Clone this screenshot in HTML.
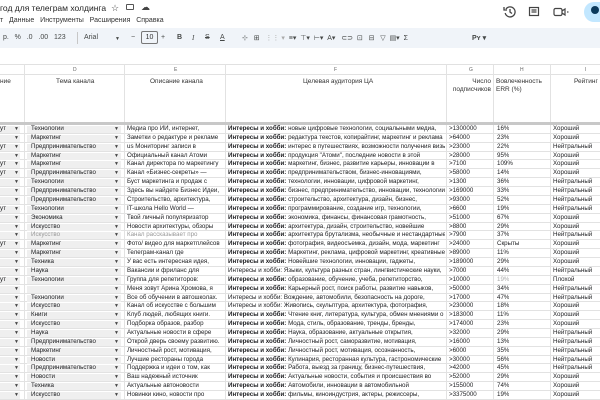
<!DOCTYPE html>
<html><head><meta charset="utf-8"><style>
*{margin:0;padding:0;box-sizing:border-box}
body{width:600px;height:400px;overflow:hidden;background:#fff;font-family:"Liberation Sans",Arial,sans-serif;color:#202124;position:relative}
.a{position:absolute;white-space:nowrap}
.tb{position:absolute;left:0;top:28px;width:600px;height:20px;background:#f0f4f9;border-radius:0}
.ti{font-size:7px;color:#444746;top:34px}
.colhdr{position:absolute;top:64px;left:0;width:600px;height:11px;border-top:1px solid #e1e1e1;border-bottom:1px solid #e1e1e1;background:#fff}
.vl{position:absolute;top:64px;width:1px;height:336px;background:#e2e2e2}
.L{font-size:5px;color:#666;top:67px}
.h{font-size:6.5px;color:#333;top:78px}
.div{position:absolute;left:0;top:122px;width:600px;height:3px;background:#c8c8c8}
.row{position:absolute;left:0;width:600px;height:8.87px;border-bottom:1px solid #e2e2e2;font-size:6.2px;line-height:8px}
.row span{position:absolute;top:0;white-space:nowrap;overflow:hidden}
.chip{position:absolute;top:1px;height:7px;background:#efefef}
.ar{font-size:5px;color:#444}
b{font-weight:bold}
</style></head><body>
<div class="a" style="left:0;top:3px;font-size:8.5px;color:#1f1f1f">год для телеграм холдинга</div>
<div class="a" style="left:111px;top:3px;font-size:9px;color:#444">☆</div>
<div class="a" style="left:126px;top:4px;width:8px;height:6px;border:1px solid #555;border-radius:1px"></div>
<div class="a" style="left:141px;top:2px;font-size:9px;color:#444">☁</div>
<div class="a" style="left:0;top:17px;font-size:7px;color:#333">т&nbsp;&nbsp;&nbsp;Данные&nbsp;&nbsp;&nbsp;Инструменты&nbsp;&nbsp;&nbsp;Расширения&nbsp;&nbsp;&nbsp;Справка</div>
<svg class="a" style="left:503px;top:5px" width="14" height="14" viewBox="0 0 14 14" fill="none" stroke="#444" stroke-width="1.3"><path d="M3 4A5 5 0 1 1 2.2 8"/><path d="M1 2v3h3"/><path d="M7 4v3l2 1.5"/></svg>
<svg class="a" style="left:528px;top:6px" width="12" height="12" viewBox="0 0 12 12" fill="none" stroke="#444" stroke-width="1.2"><rect x="1.5" y="1.5" width="9" height="8"/><path d="M3.5 4h5M3.5 6h5"/></svg>
<svg class="a" style="left:553px;top:7px" width="16" height="10" viewBox="0 0 16 10" fill="none" stroke="#444" stroke-width="1.2"><rect x="1" y="1.5" width="8" height="7" rx="1.5"/><path d="M9 4l3-2v6l-3-2"/><path d="M14 5h1.5" /></svg>
<div class="a" style="left:584px;top:2px;width:30px;height:20px;border-radius:10px;background:#c2e7ff"></div>
<div class="a" style="left:591px;top:6px;width:8px;height:8px;border-radius:50%;background:#0b3a5c"></div>
<div class="tb"></div>
<div class="a ti" style="left:3px">р.&nbsp;&nbsp;&nbsp;%&nbsp;&nbsp;&nbsp;.0&nbsp;&nbsp;&nbsp;.00&nbsp;&nbsp;&nbsp;123</div>
<div class="a" style="left:77px;top:32px;width:1px;height:12px;background:#c7c7c7"></div>
<div class="a ti" style="left:84px">Arial</div>
<div class="a ti" style="left:115px;font-size:5px;top:36px">▼</div>
<div class="a ti" style="left:131px">−</div>
<div class="a" style="left:141px;top:31px;width:17px;height:13px;border:1px solid #777;border-radius:2px;font-size:7px;text-align:center;line-height:11px;color:#333">10</div>
<div class="a ti" style="left:161px">+</div>
<div class="a ti" style="left:177px;font-weight:bold">B</div>
<div class="a ti" style="left:192px;font-style:italic;font-family:'Liberation Serif'">I</div>
<div class="a ti" style="left:205px;text-decoration:line-through">S</div>
<div class="a ti" style="left:220px;text-decoration:underline">A</div>
<div class="a ti" style="left:242px">⊹&nbsp;&nbsp;&nbsp;⊞&nbsp;&nbsp;&nbsp;<span style="color:#aaa">⋮⋮ ▾</span>&nbsp;&nbsp;≡▾&nbsp;&nbsp;⊤▾&nbsp;&nbsp;⊢▾&nbsp;&nbsp;A▾&nbsp;&nbsp;&nbsp;⊂⊃&nbsp;&nbsp;⊡&nbsp;&nbsp;&nbsp;⊟&nbsp;&nbsp;&nbsp;▽&nbsp;&nbsp;▤▾&nbsp;&nbsp;Σ</div>
<div class="a ti" style="left:472px;font-weight:bold">Рʏ ▾</div>
<div class="colhdr"></div>
<div class="vl" style="left:24px"></div><div class="vl" style="left:124px"></div><div class="vl" style="left:225px"></div><div class="vl" style="left:446px"></div><div class="vl" style="left:493px"></div><div class="vl" style="left:550px"></div>
<div class="a L" style="left:73px">D</div><div class="a L" style="left:174px">E</div><div class="a L" style="left:334px">F</div><div class="a L" style="left:469px">G</div><div class="a L" style="left:520px">H</div><div class="a L" style="left:585px">I</div>
<div class="a h" style="left:0">ние</div>
<div class="a h" style="left:56px">Тема канала</div>
<div class="a h" style="left:150px">Описание канала</div>
<div class="a h" style="left:303px">Целевая аудитория ЦА</div>
<div class="a h" style="left:451px;width:40px;text-align:right;line-height:8px">Число<br>подписчиков</div>
<div class="a h" style="left:496px;line-height:8px">Вовлеченность<br>ERR (%)</div>
<div class="a h" style="left:574px">Рейтинг</div>
<div class="div"></div>
<div id="rows"></div>
<script>
const d=[
["ут","Технологии","Медиа про ИИ, интернет,",1,"новые цифровые технологии, социальными медиа,",">1300000","16%","Хороший"],
["","Маркетинг","Заметки о редактуре и рекламе",1,"редактура текстов, копирайтинг, маркетинг и реклама",">64000","23%","Хороший"],
["ут","Предпринимательство","us Мониторинг записи в",1,"интерес в путешествиях, возможности получения визы",">23000","22%","Нейтральный"],
["","Маркетинг","Официальный канал Атоми",1,"продукция \"Атоми\", последние новости в этой",">28000","95%","Хороший"],
["ут","Маркетинг","Канал директора по маркетингу",1,"маркетинг, бизнес, развитие карьеры, инновации в",">7100","109%","Хороший"],
["ут","Предпринимательство","Канал «Бизнес-секреты» —",1,"предпринимательством, бизнес-инновациями,",">58000","14%","Хороший"],
["","Технологии","Буст маркетинга и продаж с",1,"технологии, инновации, цифровой маркетинг,",">1300","36%","Нейтральный"],
["","Предпринимательство","Здесь вы найдете Бизнес Идеи,",1,"бизнес, предпринимательство, инновации, технологии",">169000","33%","Нейтральный"],
["","Предпринимательство","Строительство, архитектура,",1,"строительство, архитектура, дизайн, бизнес,",">93000","52%","Нейтральный"],
["ут","Технологии","IT-школа Hello World —",1,"программирование, создание игр, технологии,",">6600","19%","Нейтральный"],
["","Экономика","Твой личный популяризатор",1,"экономика, финансы, финансовая грамотность,",">51000","67%","Хороший"],
["","Искусство","Новости архитектуры, обзоры",1,"архитектура, дизайн, строительство, новейшие",">8800","29%","Хороший"],
["","Искусство","Канал рассказывает про",1,"архитектура брутализма, необычные и нестандартные",">7900","37%","Нейтральный",1],
["ут","Маркетинг","Фото/ видео для маркетплейсов",1,"фотография, видеосъемка, дизайн, мода, маркетинг",">24000","Скрыты","Хороший"],
["","Маркетинг","Телеграм-канал где",1,"Маркетинг, реклама, цифровой маркетинг, креативные",">89000","11%","Хороший"],
["","Техника","У вас есть интересная идея,",1,"Новейшие технологии, инновации, гаджеты,",">189000","29%","Хороший"],
["","Наука","Вакансии и фриланс для",0,"Языки, культура разных стран, лингвистические науки,",">7000","44%","Нейтральный"],
["ут","Технологии","Группа для репетиторов:",1,"образование, обучение, учеба, репетиторство,",">10000","19%","Плохой"],
["","","Меня зовут Арина Хромова, я",1,"Карьерный рост, поиск работы, развитие навыков,",">50000","34%","Нейтральный"],
["","Технологии","Все об обучении в автошколах.",0,"Вождение, автомобили, безопасность на дороге,",">17000","47%","Нейтральный"],
["","Искусство","Канал об искусстве с большим",0,"Живопись, скульптура, архитектура, фотография,",">230000","18%","Хороший"],
["","Книги","Клуб людей, любящих книги.",1,"Чтение книг, литература, культура, обмен мнениями о",">183000","11%","Хороший"],
["","Искусство","Подборка образов, разбор",1,"Мода, стиль, образование, тренды, бренды,",">174000","23%","Хороший"],
["","Наука","Актуальные новости в сфере",1,"Наука, образование, актуальные открытия,",">32000","29%","Нейтральный"],
["","Предпринимательство","Открой дверь своему развитию.",1,"Личностный рост, саморазвитие, мотивация,",">16000","13%","Нейтральный"],
["","Маркетинг","Личностный рост, мотивация,",1,"Личностный рост, мотивация, осознанность,",">6000","35%","Нейтральный"],
["","Новости","Лучшие рестораны города",1,"Кулинария, ресторанная культура, гастрономические",">30000","56%","Нейтральный"],
["","Предпринимательство","Поддержка и идеи о том, как",1,"Работа, выезд за границу, бизнес-путешествия,",">42000","45%","Нейтральный"],
["","Новости","Ваш надежный источник",1,"Актуальные новости, события и происшествия во",">52000","29%","Хороший"],
["","Техника","Актуальные автоновости",1,"Автомобили, инновации в автомобильной",">155000","74%","Хороший"],
["","Искусство","Новинки кино, новости про",1,"фильмы, киноиндустрия, актеры, режиссеры,",">3375000","19%","Хороший"]];
let h="";d.forEach((r,i)=>{const t=125+i*8.87;const g=r[8]?"color:#999":"";
h+=`<div class="row" style="top:${t}px"><div class="chip" style="left:0;width:20px"></div><div class="chip" style="left:27px;width:94px"></div>
<span style="left:0">${r[0]}</span><span class="ar" style="left:14px">▼</span>
<span style="left:31px;width:80px;${g}">${r[1]}</span><span class="ar" style="left:114px">▼</span>
<span style="left:127px;width:97px;${g}">${r[2]}</span>
<span style="left:228px;width:217px">${r[3]?'<b>Интересы и хобби:</b>':'Интересы и хобби:'} ${r[4]}</span>
<span style="left:449px">${r[5]}</span><span style="left:497px;${r[7]=='Плохой'?'color:#aaa':''}">${r[6]}</span><span style="left:553px">${r[7]}</span></div>`});
document.getElementById("rows").innerHTML=h;
</script>
</body></html>
